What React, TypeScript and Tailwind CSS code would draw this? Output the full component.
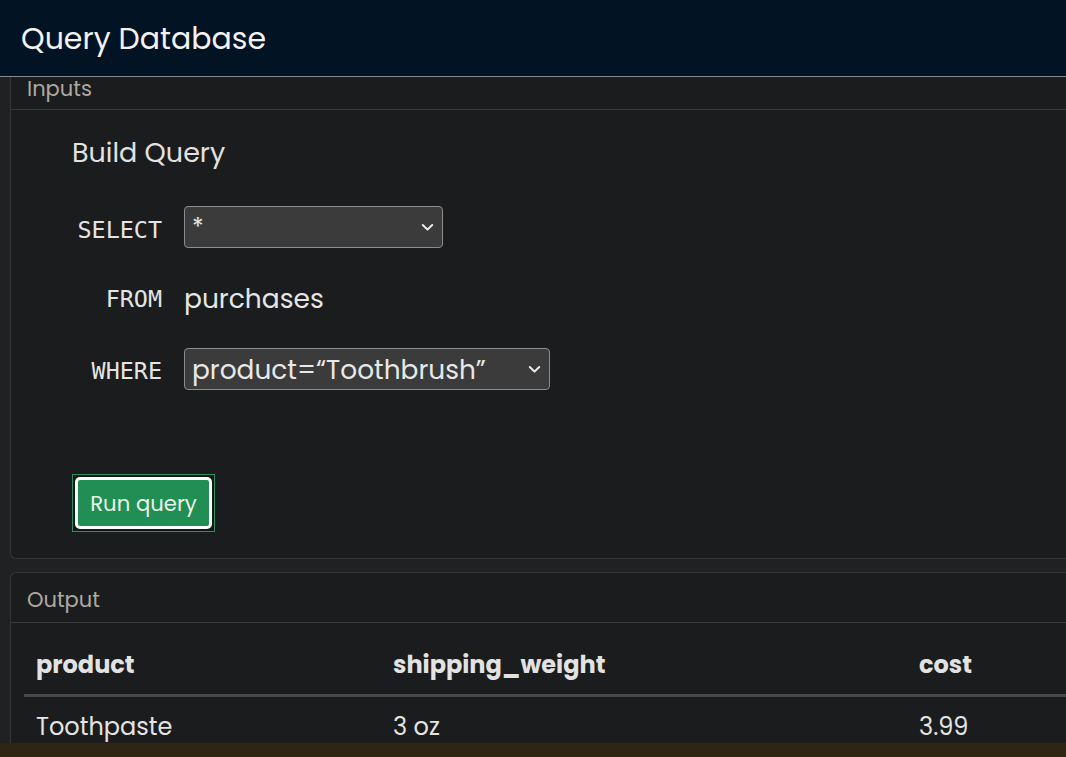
import React from "react";

const sans = "font-['Poppins','Inter','Noto_Sans',sans-serif]";
const mono = "font-['DejaVu_Sans_Mono','Liberation_Mono',monospace]";

function Chevron() {
  return (
    <svg width="13" height="9" viewBox="0 0 13 9" fill="none" className="shrink-0">
      <path d="M1.8 2 L6.5 6.6 L11.2 2" stroke="#ececec" strokeWidth="2" strokeLinecap="round" strokeLinejoin="round" />
    </svg>
  );
}

export default function App() {
  return (
    <div className={`relative min-h-screen w-full overflow-hidden bg-[#1f2123] ${sans}`}>
      <header className="flex h-[77px] items-center border-b border-[#8a8a8a] bg-[#021324] pl-[21px]">
        <h1 className="mt-[1px] text-[30px] leading-none text-[#f2f2f2]">Query Database</h1>
      </header>
      <main className="pl-[10px]">
        <section className="w-[1100px] rounded-bl-[6px] border-b border-l border-[#343536] bg-[#1b1c1d]">
          <div className="h-[33px] border-b border-[#3a3b3c] pl-[16px] text-[21px] leading-[24px] text-[#aeaaa3]">
            Inputs
          </div>
          <div className="pb-[26px] pl-[61px] pt-[26px]">
            <h2 className="mt-[1px] text-[27px] leading-[32px] text-[#e2e2e2]">Build Query</h2>
            <div className="mt-[37px] flex h-[42px] items-center">
              <div className={`w-[90px] pt-[5px] text-right text-[23.4px] leading-[30px] text-[#e4e4e4] ${mono}`}>SELECT</div>
              <div className="ml-[22px] flex h-[42px] w-[259px] items-center justify-between rounded-[4px] border border-[#8c8c8c] bg-[#3b3b3b] pl-[7px] pr-[8px]">
                <span className="mt-[2px] text-[24px] leading-[30px] text-[#e8e8e8]">*</span>
                <Chevron />
              </div>
            </div>
            <div className="mt-[30px] flex h-[41px] items-center">
              <div className={`w-[90px] pt-[1px] text-right text-[23.4px] leading-[30px] text-[#e4e4e4] ${mono}`}>FROM</div>
              <div className="ml-[22px] pt-[1px] text-[26.5px] leading-[34px] text-[#e6e6e6]">purchases</div>
            </div>
            <div className="mt-[29px] flex h-[42px] items-center">
              <div className={`w-[90px] pt-[4px] text-right text-[23.4px] leading-[30px] text-[#e4e4e4] ${mono}`}>WHERE</div>
              <div className="ml-[22px] flex h-[42px] w-[366px] items-center justify-between rounded-[4px] border border-[#8c8c8c] bg-[#3b3b3b] pl-[7px] pr-[8px]">
                <span className="pt-[2px] text-[26.4px] leading-[34px] text-[#e8e8e8]">product=“Toothbrush”</span>
                <Chevron />
              </div>
            </div>
            <div className="mt-[84px]">
              <div className="inline-flex border border-[#2f8f5c] bg-[#0f1a14] p-[2px]">
                <button className="flex h-[52px] w-[137px] items-center justify-center rounded-[5px] border-[3px] border-white bg-[#218f54] pt-[2px] text-[21.2px] text-[#e9f3ea]">
                  Run query
                </button>
              </div>
            </div>
          </div>
        </section>

        <section className="mt-[13px] w-[1100px] rounded-tl-[6px] border-l border-t border-[#343536] bg-[#1b1c1d]">
          <div className="flex h-[50px] items-center border-b border-[#3a3b3c] pl-[16px] pt-[5px] text-[21px] text-[#aeaaa3]">
            Output
          </div>
          <div className="pl-[13px]">
            <table className="w-[1080px] border-collapse text-left">
              <thead>
                <tr className="h-[72px] border-b-[3px] border-[#46484a]">
                  <th className="w-[357px] pl-[12px] pt-[13px] text-[24px] font-bold text-[#e2e2e2]">product</th>
                  <th className="w-[526px] pl-[12px] pt-[13px] text-[24px] font-bold text-[#e2e2e2]">shipping_weight</th>
                  <th className="pl-[12px] pt-[13px] text-[24px] font-bold text-[#e2e2e2]">cost</th>
                </tr>
              </thead>
              <tbody>
                <tr className="h-[60px]">
                  <td className="pl-[12px] align-top pt-[12px] text-[24px] text-[#e4e4e4]">Toothpaste</td>
                  <td className="pl-[12px] align-top pt-[12px] text-[24px] text-[#e4e4e4]">3 oz</td>
                  <td className="pl-[12px] align-top pt-[12px] text-[24px] text-[#e4e4e4]">3.99</td>
                </tr>
              </tbody>
            </table>
          </div>
        </section>
      </main>
      <div className="fixed bottom-0 left-0 h-[14px] w-full bg-[#2e2613]" />
    </div>
  );
}
